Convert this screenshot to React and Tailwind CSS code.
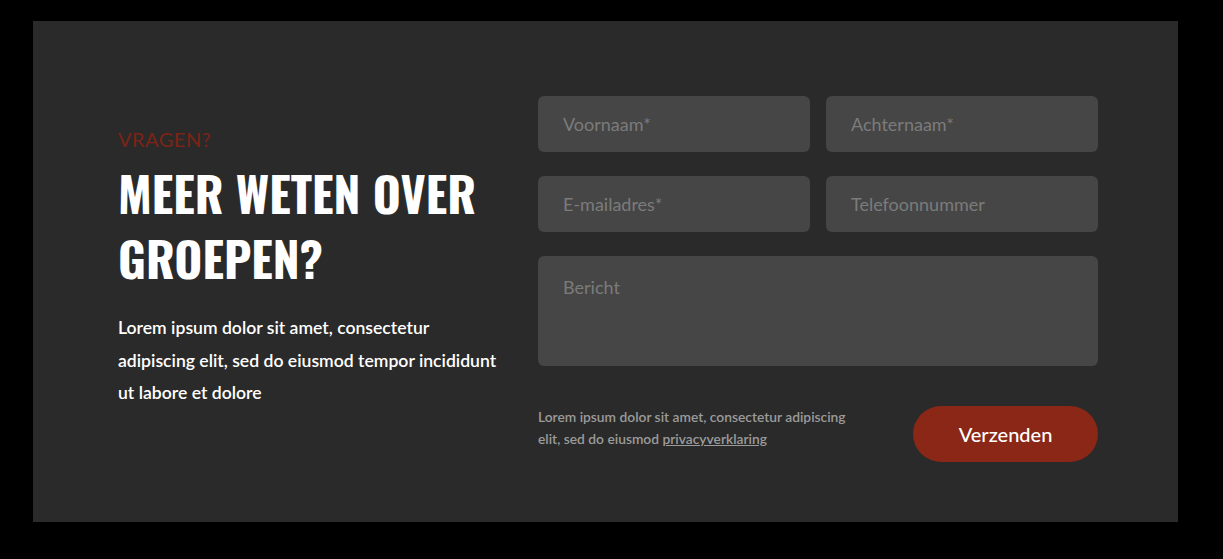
import { useState } from 'react'

const fieldClass =
  'h-[56px] w-full rounded-[6px] bg-[#464646] px-[25px] text-[18px] text-white placeholder-[#7b7b7b] focus:outline-none'

export default function App() {
  const [form, setForm] = useState({
    firstName: '',
    lastName: '',
    email: '',
    phone: '',
    message: '',
  })

  const update = (key) => (e) => setForm({ ...form, [key]: e.target.value })

  return (
    <div className="min-h-screen bg-black pt-[21px] pl-[33px] pr-[45px] pb-[37px] font-['Lato',_'Noto_Sans',_sans-serif]">
      <section className="flex h-[501px] w-[1145px] bg-[#2a2a2a] pl-[85px] pr-[80px] pt-[75px]">
        {/* Intro */}
        <div className="w-[385px] pt-[31px]">
          <p className="text-[20px] leading-[24px] tracking-[0.5px] text-[#7b2416]">VRAGEN?</p>
          <h2 className="mt-[9px] font-['Oswald',_'Liberation_Sans_Narrow',_'DejaVu_Sans_Condensed',_sans-serif] text-[48px] font-bold uppercase leading-[65px] text-white">
            Meer weten over groepen?
          </h2>
          <p className="mt-[22px] text-[17.6px] font-semibold leading-[32.5px] text-white">
            Lorem ipsum dolor sit amet, consectetur adipiscing elit, sed do eiusmod tempor incididunt ut
            labore et dolore
          </p>
        </div>

        {/* Form */}
        <form className="ml-auto w-[560px]" onSubmit={(e) => e.preventDefault()}>
          <div className="grid grid-cols-2 gap-x-[16px] gap-y-[24px]">
            <input className={fieldClass} placeholder="Voornaam*" value={form.firstName} onChange={update('firstName')} />
            <input className={fieldClass} placeholder="Achternaam*" value={form.lastName} onChange={update('lastName')} />
            <input className={fieldClass} placeholder="E-mailadres*" value={form.email} onChange={update('email')} />
            <input className={fieldClass} placeholder="Telefoonnummer" value={form.phone} onChange={update('phone')} />
            <textarea
              className="col-span-2 h-[110px] resize-none rounded-[6px] bg-[#464646] px-[25px] py-[19px] text-[18px] leading-[24px] text-white placeholder-[#7b7b7b] focus:outline-none"
              placeholder="Bericht"
              value={form.message}
              onChange={update('message')}
            />
          </div>

          <div className="mt-[40px] flex items-center justify-between">
            <p className="-mt-[12px] w-[318px] text-[13.8px] font-semibold leading-[22px] text-[#9b9b9b]">
              Lorem ipsum dolor sit amet, consectetur adipiscing elit, sed do eiusmod{' '}
              <a href="#" className="underline">privacyverklaring</a>
            </p>
            <button
              type="submit"
              className="h-[56px] w-[185px] rounded-full bg-[#8a2716] text-[20px] font-medium text-white"
            >
              Verzenden
            </button>
          </div>
        </form>
      </section>
    </div>
  )
}
